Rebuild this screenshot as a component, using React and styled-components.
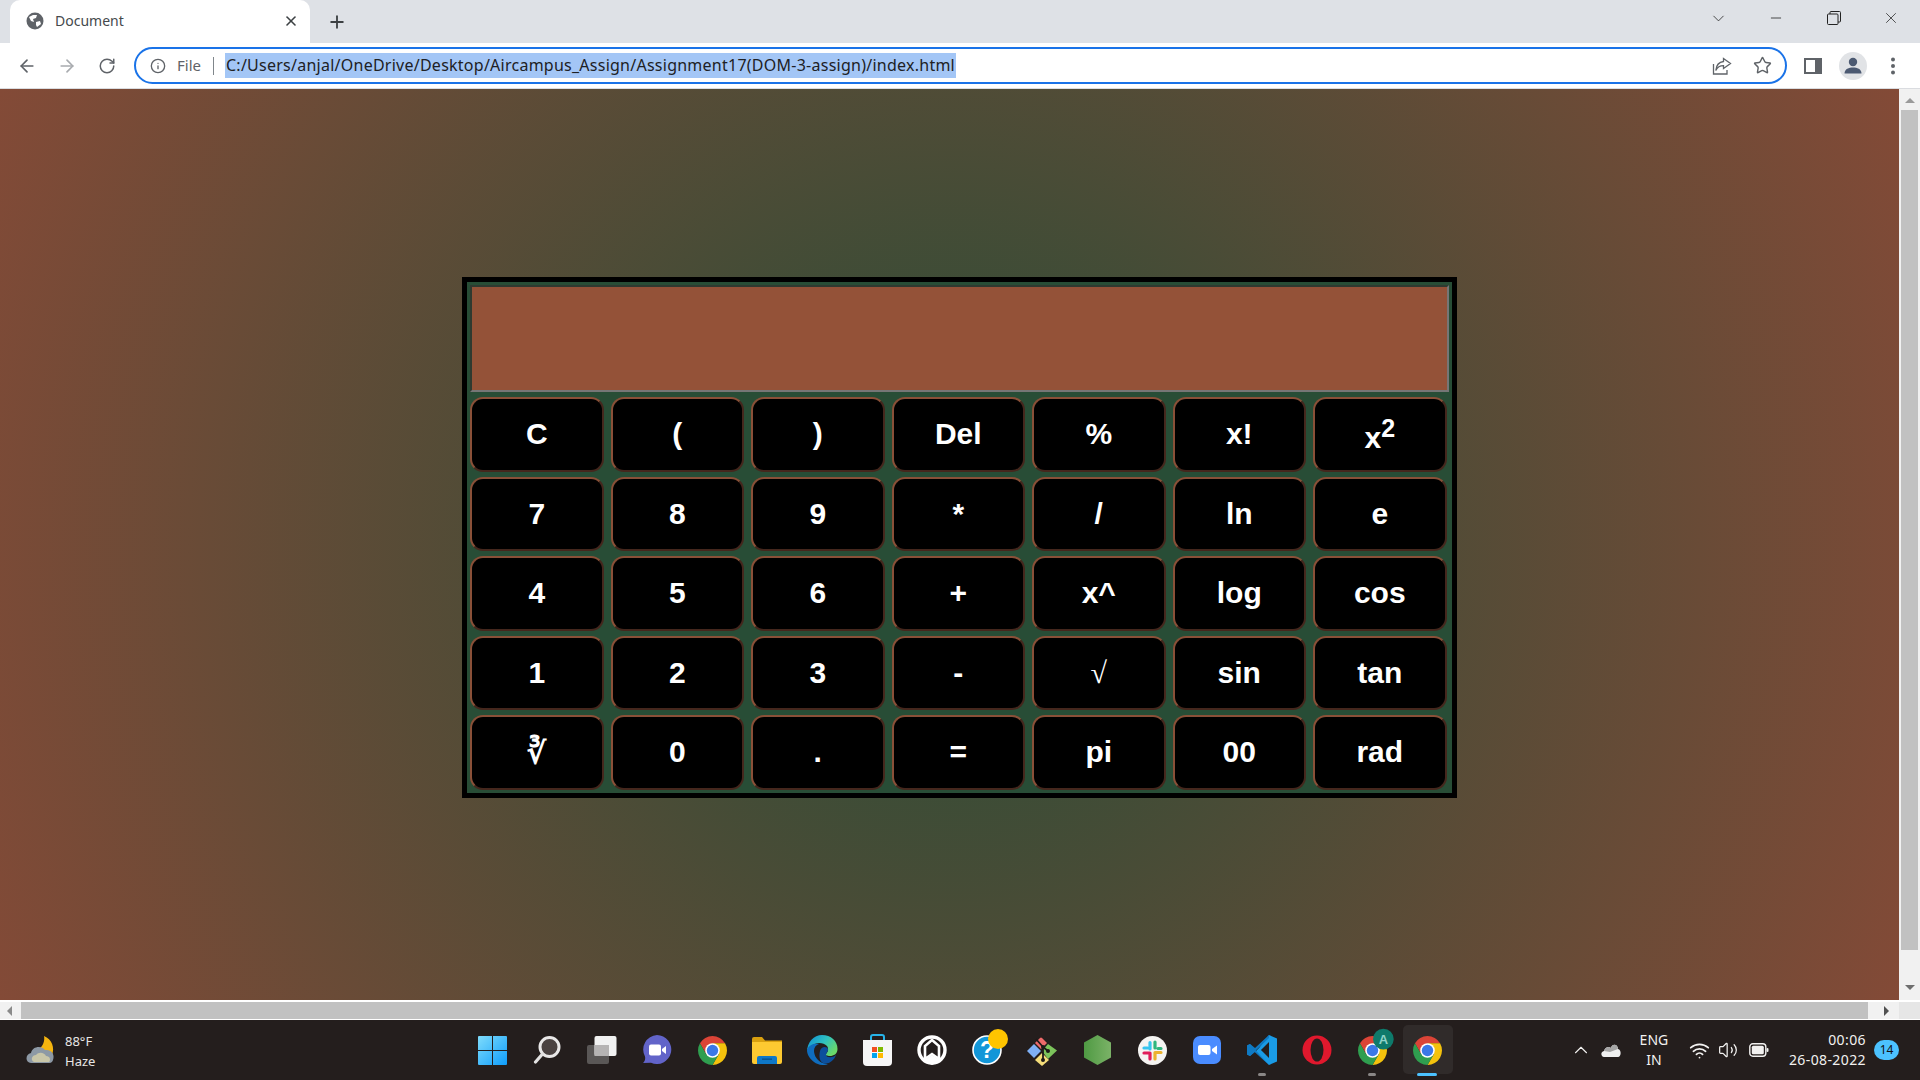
import React from 'react'
import styled, { createGlobalStyle } from 'styled-components'
import { ArrowLeft, ArrowRight, RotateCw, Info, Star, X, Plus, Minus, ChevronDown, ChevronUp, Wifi, Volume2 } from 'lucide-react'

const GlobalStyle = createGlobalStyle`
  html, body {
    margin: 0;
    padding: 0;
    overflow: hidden;
  }
  * {
    box-sizing: border-box;
  }
`

const Screen = styled.div`
  width: 1920px;
  height: 1080px;
  display: flex;
  flex-direction: column;
  font-family: 'Noto Sans', sans-serif;
  overflow: hidden;
`

const TabStrip = styled.div`
  height: 43px;
  flex: none;
  display: flex;
  align-items: stretch;
  padding-left: 10px;
  background: #dee1e6;
`

const Tab = styled.div`
  width: 300px;
  display: flex;
  align-items: center;
  padding: 0 11px 2px 16px;
  background: #fff;
  border-radius: 10px 10px 0 0;
  color: #45494d;
  font-size: 14px;
`

const TabTitle = styled.span`
  flex: 1;
  margin-left: 11px;
`

const NewTab = styled.div`
  width: 54px;
  display: flex;
  align-items: center;
  justify-content: center;
  color: #3c4043;
`

const WindowControls = styled.div`
  margin-left: auto;
  display: flex;
`

const WindowButton = styled.div`
  width: 57.5px;
  display: flex;
  align-items: center;
  justify-content: center;
  padding-bottom: 7px;
  color: #222;
`

const Toolbar = styled.div`
  height: 46px;
  flex: none;
  display: flex;
  align-items: center;
  padding: 0 7px;
  background: #fff;
  border-bottom: 1px solid #dadce0;
`

const NavButton = styled.div`
  width: 40px;
  display: flex;
  align-items: center;
  justify-content: center;
  color: ${p => (p.$muted ? '#a8abaf' : '#5f6368')};
`

const Omnibox = styled.div`
  flex: 1;
  height: 37px;
  margin-left: 7px;
  margin-right: 6px;
  display: flex;
  align-items: center;
  padding: 0 13px 0 14px;
  border: 2px solid #1a73e8;
  border-radius: 19px;
  color: #5f6368;
`

const FileLabel = styled.span`
  margin-left: 11px;
  padding-bottom: 1px;
  font-size: 15px;
`

const Divider = styled.span`
  width: 1px;
  height: 18px;
  margin: 0 11px 0 12px;
  background: #80868b;
`

const Url = styled.span`
  height: 25px;
  line-height: 25px;
  padding: 0 1px;
  background: #a3c6f6;
  color: #202124;
  font-size: 16px;
  letter-spacing: 0.25px;
  white-space: nowrap;
`

const OmniboxActions = styled.div`
  margin-left: auto;
  display: flex;
  align-items: center;
  gap: 21px;
  color: #5f6368;
`

const Avatar = styled.div`
  width: 28px;
  height: 28px;
  border-radius: 50%;
  background: #e1e3e6;
  display: flex;
  align-items: center;
  justify-content: center;
`

const Middle = styled.div`
  flex: 1;
  min-height: 0;
  display: flex;
`

const Page = styled.main`
  flex: 1;
  padding: 188px 0 0 462px;
  background: radial-gradient(circle 1120px at 950px 456px, #284d36 0%, #894a37 100%);
`

const Calculator = styled.section`
  width: 995px;
  height: 521px;
  padding: 3px;
  border: 5px solid #000;
  background: #284d36;
`

const Display = styled.div`
  width: 979px;
  height: 107px;
  border: 2px solid;
  border-color: #2f3a30 #767676 #767676 #2f3a30;
  background: #945238;
`

const Keys = styled.div`
  margin-top: 5px;
  display: grid;
  grid-template-columns: repeat(7, 133.5px);
  grid-auto-rows: 74.5px;
  column-gap: 7px;
  row-gap: 5px;
`

const Key = styled.button`
  padding: 0;
  border: 2px solid;
  border-color: #8a5038 #45271d #45271d #8a5038;
  border-radius: 13px;
  background: #000;
  color: #fff;
  font-family: ${p => (p.$thin ? "'Liberation Serif', serif" : "'Liberation Sans', Arial, sans-serif")};
  font-size: 30px;
  font-weight: ${p => (p.$thin ? 400 : 700)};
`

const HScroll = styled.div`
  height: 20px;
  flex: none;
  display: flex;
  align-items: stretch;
  padding: 2px 0 1px;
  background: #fff;
`

const HTrack = styled.div`
  width: 1899px;
  display: flex;
  align-items: center;
  background: #f1f1f1;
  color: #6e6e6e;
`

const HThumb = styled.div`
  height: 100%;
  width: 1847px;
  margin: 0 16px 0 9px;
  flex: none;
  background: #c1c1c1;
`

const Corner = styled.div`
  flex: 1;
  background: #e6e6e6;
`

const VScroll = styled.aside`
  width: 21px;
  flex: none;
  display: flex;
  flex-direction: column;
  align-items: center;
  background: #f1f1f1;
`

const VThumb = styled.div`
  width: 17px;
  height: 840px;
  margin: 7px 0 35px;
  background: #c1c1c1;
`

const ArrowUp = styled.div`
  margin-top: 9px;
  border: 5px solid transparent;
  border-top: 0;
  border-bottom: 5px solid #9a9a9a;
`

const ArrowDown = styled.div`
  border: 5px solid transparent;
  border-bottom: 0;
  border-top: 5px solid #6e6e6e;
`

const ArrowSide = styled.div`
  flex: none;
  border: 5px solid transparent;
  ${p => (p.$right ? 'border-right: 0; border-left: 5px solid #505050;' : 'margin-left: 7px; border-left: 0; border-right: 5px solid #8a8a8a;')}
`

const Taskbar = styled.footer`
  height: 60px;
  flex: none;
  display: flex;
  align-items: center;
  background: #241e1d;
  color: #fff;
`

const Weather = styled.div`
  width: 464.5px;
  flex: none;
  display: flex;
  align-items: center;
  padding-left: 25px;
  gap: 9px;
`

const WeatherText = styled.div`
  padding-top: 2px;
  font-size: 13px;
  line-height: 20px;
  color: #e8e6e5;
`

const Dock = styled.div`
  display: flex;
  height: 100%;
`

const DockSlot = styled.div`
  position: relative;
  width: 55px;
  display: flex;
  align-items: center;
  justify-content: center;
  &::before {
    content: '';
    display: ${p => (p.$active ? 'block' : 'none')};
    position: absolute;
    left: 3px;
    right: 2px;
    top: 5px;
    bottom: 6px;
    border-radius: 5px;
    background: #302b2a;
  }
  > svg {
    position: relative;
  }
`

const RunDot = styled.span`
  position: absolute;
  left: 50%;
  bottom: 4px;
  height: 3px;
  width: ${p => (p.$active ? '20px' : '8px')};
  margin-left: ${p => (p.$active ? '-10px' : '-4px')};
  border-radius: 2px;
  background: ${p => (p.$active ? '#4cc2ff' : '#8a8786')};
`

const Tray = styled.div`
  margin-left: auto;
  display: flex;
  align-items: center;
  padding-right: 21px;
  color: #f2f1f0;
`

const Lang = styled.div`
  width: 36px;
  margin: 0 17px 0 15px;
  text-align: center;
  font-size: 14px;
  line-height: 20px;
`

const Clock = styled.div`
  margin-left: 20px;
  text-align: right;
  font-size: 14px;
  letter-spacing: 0.4px;
  line-height: 20px;
`

const Badge = styled.div`
  width: 25px;
  height: 20px;
  margin-left: 8px;
  border-radius: 10px;
  background: #4cc2ff;
  color: #111;
  text-align: center;
  font-size: 12px;
  line-height: 20px;
`

const Globe = () => (
  <svg width="18" height="18" viewBox="0 0 18 18">
    <circle cx="9" cy="9" r="8.5" fill="#5f6368" />
    <path d="M3 5 L7 3 L11 3 L10 6 L7 7 L8 10 L5 9 Z M10 10 L14 9 L15 12 L11 15 L10 13 Z" fill="#fff" />
  </svg>
)

const Restore = () => (
  <svg width="14" height="14" viewBox="0 0 14 14" fill="none" stroke="currentColor" strokeWidth="1">
    <rect x="0.5" y="3" width="10.5" height="10.5" rx="1" />
    <path d="M3 3 V1.5 a1 1 0 0 1 1-1 H12.5 a1 1 0 0 1 1 1 V10 a1 1 0 0 1-1 1 H11" />
  </svg>
)

const Share = () => (
  <svg width="20" height="20" viewBox="0 0 20 20" fill="none" stroke="#5f6368" strokeWidth="1.3">
    <path d="M1.5 8 V18 H15 V14" />
    <path d="M11.5 2.5 L18.5 7.5 L11.5 12.5 V9.7 C8 9.7 5.5 11 3.8 14.5 C4.3 9.5 7 6 11.5 5.5 Z" />
  </svg>
)

const SidePanel = () => (
  <svg width="18" height="16" viewBox="0 0 18 16">
    <path fillRule="evenodd" d="M0 0 H18 V16 H0 Z M2 2 V14 H11 V2 Z" fill="#5f6368" />
  </svg>
)

const Person = () => (
  <svg width="20" height="20" viewBox="0 0 20 20" fill="#4c5a72">
    <circle cx="10" cy="6" r="4.2" />
    <path d="M1.5 17.5 C1.5 13 6 11.5 10 11.5 C14 11.5 18.5 13 18.5 17.5 Z" />
  </svg>
)

const Dots = () => (
  <svg width="6" height="18" viewBox="0 0 6 18" fill="#5f6368">
    <circle cx="3" cy="2.5" r="2" />
    <circle cx="3" cy="9" r="2" />
    <circle cx="3" cy="15.5" r="2" />
  </svg>
)

const MoonCloud = () => (
  <svg width="31" height="30" viewBox="0 0 31 30">
    <path d="M19 1 C27 4 30 13 27 20 L14 14 C18 11 20 6 19 1 Z" fill="#f5b50f" />
    <path d="M6 28 C0 28 0 19 6 18 C7 11 17 10 20 15 C27 14 30 20 28 25 C27 28 25 28 23 28 Z" fill="#8d99a5" />
    <path d="M9 27 C5 25 7 20 11 20 C14 16 20 18 21 21 C25 21 26 25 24 27 Z" fill="#c9c6a8" />
  </svg>
)

const WindowsLogo = () => (
  <svg width="29" height="29" viewBox="0 0 29 29">
    <defs>
      <linearGradient id="win" x1="0" y1="0" x2="1" y2="1">
        <stop offset="0" stopColor="#7fdcfb" />
        <stop offset="1" stopColor="#0f9dfb" />
      </linearGradient>
    </defs>
    <path d="M1 0 H14 V14 H0 V1 a1 1 0 0 1 1-1 Z M15 0 H28 a1 1 0 0 1 1 1 V14 H15 Z M0 15 H14 V29 H1 a1 1 0 0 1-1-1 Z M15 15 H29 V28 a1 1 0 0 1-1 1 H15 Z" fill="url(#win)" />
  </svg>
)

const SearchGlass = () => (
  <svg width="28" height="28" viewBox="0 0 28 28">
    <circle cx="16.5" cy="11" r="9.5" fill="#4a4241" stroke="#e9e8e8" strokeWidth="3" />
    <path d="M9.5 18 L2.5 26" stroke="#e3e2e2" strokeWidth="3.2" strokeLinecap="round" />
  </svg>
)

const TaskView = () => (
  <svg width="30" height="28" viewBox="0 0 30 28">
    <rect x="0" y="9" width="22" height="19" rx="2" fill="#5a5756" />
    <rect x="7.5" y="0" width="22" height="20" rx="2" fill="#f1f1f1" />
    <rect x="7.5" y="9" width="14.5" height="11" fill="#b5b3b3" />
  </svg>
)

const ChatIcon = () => (
  <svg width="30" height="30" viewBox="0 0 30 30">
    <path d="M15 0 A14.5 14.5 0 1 1 9 27.8 L1 28 C3 26 3.5 24 3 21.5 A14.5 14.5 0 0 1 15 0 Z" fill="#6264c9" />
    <rect x="7" y="9.5" width="12" height="11" rx="2" fill="#fff" />
    <path d="M20 14 L24 11 V19 L20 16 Z" fill="#fff" />
  </svg>
)

const ChromeMark = () => (
  <>
    <path d="M28.12 9 A14 14 0 0 0 3.88 9 L9.94 19.5 L16 9 Z" fill="#db4437" />
    <path d="M28.12 9 A14 14 0 0 1 16 30 L22.06 19.5 L16 9 Z" fill="#f4c20d" />
    <path d="M16 30 A14 14 0 0 1 3.88 9 L9.94 19.5 L22.06 19.5 Z" fill="#2f9e4f" />
    <circle cx="16" cy="16" r="7" fill="#fff" />
    <circle cx="16" cy="16" r="5.5" fill="#3b78e7" />
  </>
)

const Chrome = () => (
  <svg width="29" height="29" viewBox="2 2 28 28">
    <ChromeMark />
  </svg>
)

const ChromeBadged = () => (
  <svg width="29" height="29" viewBox="2 2 28 28" overflow="visible">
    <ChromeMark />
    <circle cx="26.5" cy="5" r="10" fill="#0e7a6b" />
    <text x="26.5" y="9.5" textAnchor="middle" fontSize="12.5" fontWeight="700" fill="#8fd3c8" fontFamily="Liberation Sans">A</text>
  </svg>
)

const Folder = () => (
  <svg width="30" height="27" viewBox="0 0 30 27">
    <path d="M0 2 a2 2 0 0 1 2-2 H10 L13 3.5 H30 V7 H0 Z" fill="#d9a00f" />
    <path d="M0 5 H30 V25 a2 2 0 0 1-2 2 H2 a2 2 0 0 1-2-2 Z" fill="#fdc931" />
    <path d="M5 21 a2 2 0 0 1 2-2 H23 a2 2 0 0 1 2 2 V27 H5 Z" fill="#0f78c8" />
    <rect x="10" y="21.5" width="10" height="1.3" fill="#0a4f88" />
  </svg>
)

const Edge = () => (
  <svg width="31" height="30" viewBox="0 0 31 30">
    <defs>
      <linearGradient id="edgeA" x1="0" y1="0" x2="1" y2="0.6">
        <stop offset="0" stopColor="#0c8bd6" />
        <stop offset="0.55" stopColor="#2fc1c0" />
        <stop offset="1" stopColor="#6ad96a" />
      </linearGradient>
    </defs>
    <path d="M15 0 C24 0 30.5 6 30.5 14 C30.5 19 26.5 21 23 21 C20 21 18 20 19 19 C21 17 22 14 20 11 C16 7 8 7 3 12 C0 14 0 17 0 17 C0 7 7 0 15 0 Z" fill="url(#edgeA)" />
    <path d="M0 15 C2 9 8 8 12 9 C8 10 6 14 7.5 19 C9 25 15 29 21 29 C17 31 11 30 7 27 C2 23 0 19 0 15 Z" fill="#0f6cbd" />
    <path d="M13 16 C14 11 20 11 21 14 C21.5 16 19 18 19 20 C19.5 23 26 23 29 20 C27 26 21 30 16 28 C12 26 12 20 13 16 Z" fill="#0c4f9c" />
  </svg>
)

const Store = () => (
  <svg width="29" height="32" viewBox="0 0 29 32">
    <path d="M8 7 V3 a2 2 0 0 1 2-2 H19 a2 2 0 0 1 2 2 V7" fill="none" stroke="#27b3e8" strokeWidth="2" />
    <path d="M0 6 H29 V28 a4 4 0 0 1-4 4 H4 a4 4 0 0 1-4-4 Z" fill="#f6f6f6" />
    <rect x="9" y="13" width="5" height="5" fill="#f25022" />
    <rect x="15" y="13" width="5" height="5" fill="#7fba00" />
    <rect x="9" y="19" width="5" height="5" fill="#00a4ef" />
    <rect x="15" y="19" width="5" height="5" fill="#ffb900" />
  </svg>
)

const RingLogo = () => (
  <svg width="30" height="30" viewBox="0 0 30 30">
    <circle cx="15" cy="15" r="13" fill="#241e1d" stroke="#fff" strokeWidth="3.4" />
    <path d="M8 24 V11 L15 5 L22 11 V24 L15 19 Z" fill="none" stroke="#fff" strokeWidth="2.6" />
    <path d="M6 26 L15 20 L24 26 L15 30 Z" fill="#fff" />
  </svg>
)

const HelpBadge = () => (
  <svg width="30" height="30" viewBox="0 0 30 30" overflow="visible">
    <circle cx="15" cy="15" r="14" fill="#1296d8" stroke="#fff" strokeWidth="1.6" />
    <text x="15" y="23" textAnchor="middle" fontSize="23" fontWeight="700" fill="#fff" fontFamily="Liberation Sans">?</text>
    <circle cx="26" cy="4" r="10" fill="#ffc400" />
  </svg>
)

const GitDiamond = () => (
  <svg width="31" height="31" viewBox="0 0 31 31">
    <path d="M8 8 L13 3 a1.5 1.5 0 0 1 2 0 L20 8 L14 14 Z" fill="#ee6a6a" />
    <path d="M21 9 L30 15.5 L21 24 L15 16 Z" fill="#7cc35b" />
    <path d="M7 9 L14 16 L7 23 L0 16 Z" fill="#7fb0f5" />
    <path d="M15 18 L22 25 L15 31 L8 25 Z" fill="#f5dd7a" />
    <path d="M9 4 L16 12 M16 12 V25 M16 12 L21 16" stroke="#1d1a19" strokeWidth="1.8" fill="none" />
    <circle cx="16" cy="12" r="2" fill="#1d1a19" />
    <circle cx="16" cy="25" r="2" fill="#1d1a19" />
    <circle cx="21" cy="16" r="2" fill="#1d1a19" />
  </svg>
)

const NodeHex = () => (
  <svg width="27" height="30" viewBox="0 0 27 30">
    <defs>
      <linearGradient id="node" x1="0" y1="0" x2="1" y2="0">
        <stop offset="0" stopColor="#4f9a43" />
        <stop offset="1" stopColor="#7bb267" />
      </linearGradient>
    </defs>
    <path d="M13.5 0 L27 7.5 V22.5 L13.5 30 L0 22.5 V7.5 Z" fill="url(#node)" />
  </svg>
)

const Slack = () => (
  <svg width="29" height="29" viewBox="0 0 29 29">
    <circle cx="14.5" cy="14.5" r="14.5" fill="#f5f4f2" />
    <g strokeWidth="3.2" strokeLinecap="round" fill="none">
      <path d="M12 6.5 V13 M6 12 H9.5" stroke="#36c5f0" />
      <path d="M17 6 V12 M20 12.5 H23" stroke="#2eb67d" />
      <path d="M17 23 V16.5 M17 16.5 H23" stroke="#ecb22e" />
      <path d="M12 23 V17 M6 17 H12" stroke="#e01e5a" />
    </g>
  </svg>
)

const ZoomLogo = () => (
  <svg width="28" height="28" viewBox="0 0 28 28">
    <rect width="28" height="28" rx="7" fill="#4a8cff" />
    <rect x="5" y="9" width="12.5" height="10" rx="2" fill="#fff" />
    <path d="M19 13 L24 9.5 V18.5 L19 15 Z" fill="#fff" />
  </svg>
)

const VSCode = () => (
  <svg width="30" height="30" viewBox="0 0 30 30">
    <path d="M22 0 L30 3.5 V26.5 L22 30 L8 17 L12 13 Z" fill="#1a9be6" />
    <path d="M22 0 L8 13 L3 9 L0 10.5 V19.5 L3 21 L22 3 Z" fill="#0f7ac4" />
    <path d="M22 30 L3 9 L0 10.5 V19.5 L3 21 L8 17 L22 30 V21 L14 15 L22 9 Z" fill="#0f7ac4" />
    <path d="M22 7 L14 15 L22 23 Z" fill="#241e1d" />
  </svg>
)

const Opera = () => (
  <svg width="30" height="30" viewBox="0 0 30 30">
    <circle cx="15" cy="15" r="14.5" fill="#e0182d" />
    <ellipse cx="15" cy="15" rx="6.5" ry="11.5" fill="#241e1d" />
  </svg>
)

const Cloud = () => (
  <svg width="20" height="14" viewBox="0 0 20 14">
    <path d="M3 14 C0 14 -1 9 3 8 C4 4 8 3 10 5 C11 0 17 1 17 6 C21 7 20 14 17 14 Z" fill="#f0f0f0" />
    <path d="M3 8 C4 4 8 3 10 5 C11 0 17 1 17 6 L9 9 Z" fill="#a5a5a5" />
  </svg>
)

const Battery = () => (
  <svg width="20" height="14" viewBox="0 0 20 14">
    <rect x="0.8" y="0.8" width="16" height="12.4" rx="3" fill="none" stroke="#f2f1f0" strokeWidth="1.4" />
    <rect x="2.8" y="2.8" width="12" height="8.4" rx="1.5" fill="#f2f1f0" />
    <rect x="17.5" y="5" width="2" height="4" rx="1" fill="#f2f1f0" />
  </svg>
)

const keys = [
  'C', '(', ')', 'Del', '%', 'x!', <>x<sup key="s">2</sup></>,
  '7', '8', '9', '*', '/', 'ln', 'e',
  '4', '5', '6', '+', 'x^', 'log', 'cos',
  '1', '2', '3', '-', '√', 'sin', 'tan',
  '∛', '0', '.', '=', 'pi', '00', 'rad'
]

const dockIcons = [
  WindowsLogo, SearchGlass, TaskView, ChatIcon, Chrome, Folder, Edge, Store, RingLogo,
  HelpBadge, GitDiamond, NodeHex, Slack, ZoomLogo, VSCode, Opera, ChromeBadged, Chrome
]

const App = () => (
  <Screen>
    <GlobalStyle />
    <TabStrip>
      <Tab>
        <Globe />
        <TabTitle>Document</TabTitle>
        <X size={16} strokeWidth={2.4} color="#3c4043" />
      </Tab>
      <NewTab>
        <Plus size={20} strokeWidth={2.2} />
      </NewTab>
      <WindowControls>
        <WindowButton><ChevronDown size={19} strokeWidth={1} /></WindowButton>
        <WindowButton><Minus size={16} strokeWidth={1.2} /></WindowButton>
        <WindowButton><Restore /></WindowButton>
        <WindowButton><X size={18} strokeWidth={1} /></WindowButton>
      </WindowControls>
    </TabStrip>
    <Toolbar>
      <NavButton><ArrowLeft size={20} strokeWidth={2} /></NavButton>
      <NavButton $muted><ArrowRight size={20} strokeWidth={2} /></NavButton>
      <NavButton><RotateCw size={18} strokeWidth={2} /></NavButton>
      <Omnibox>
        <Info size={16} strokeWidth={2} />
        <FileLabel>File</FileLabel>
        <Divider />
        <Url>C:/Users/anjal/OneDrive/Desktop/Aircampus_Assign/Assignment17(DOM-3-assign)/index.html</Url>
        <OmniboxActions>
          <Share />
          <Star size={19} strokeWidth={1.8} />
        </OmniboxActions>
      </Omnibox>
      <NavButton><SidePanel /></NavButton>
      <NavButton><Avatar><Person /></Avatar></NavButton>
      <NavButton><Dots /></NavButton>
    </Toolbar>
    <Middle>
      <Page>
        <Calculator>
          <Display />
          <Keys>
            {keys.map((k, i) => <Key key={i} $thin={k === '√'}>{k}</Key>)}
          </Keys>
        </Calculator>
      </Page>
      <VScroll>
        <ArrowUp />
        <VThumb />
        <ArrowDown />
      </VScroll>
    </Middle>
    <HScroll>
      <HTrack>
        <ArrowSide />
        <HThumb />
        <ArrowSide $right />
      </HTrack>
      <Corner />
    </HScroll>
    <Taskbar>
      <Weather>
        <MoonCloud />
        <WeatherText>88°F<br />Haze</WeatherText>
      </Weather>
      <Dock>
        {dockIcons.map((Icon, i) => (
          <DockSlot key={i} $active={i === 17}>
            <Icon />
            {i === 14 || i === 16 ? <RunDot /> : null}
            {i === 17 ? <RunDot $active /> : null}
          </DockSlot>
        ))}
      </Dock>
      <Tray>
        <ChevronUp size={22} strokeWidth={1.2} style={{ marginRight: 9 }} />
        <Cloud />
        <Lang>ENG<br />IN</Lang>
        <Wifi size={21} strokeWidth={2} style={{ marginRight: 8 }} />
        <Volume2 size={20} strokeWidth={1.5} style={{ marginRight: 11 }} />
        <Battery />
        <Clock>00:06<br />26-08-2022</Clock>
        <Badge>14</Badge>
      </Tray>
    </Taskbar>
  </Screen>
)

export default App
